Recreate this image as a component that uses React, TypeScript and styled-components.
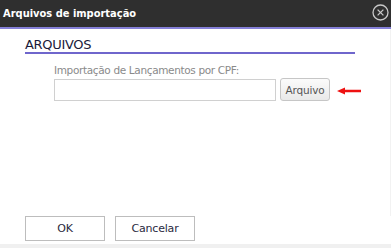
import React from 'react'
import styled, { createGlobalStyle } from 'styled-components'

const GlobalStyle = createGlobalStyle`
  html, body {
    margin: 0;
    padding: 0;
    background: #ffffff;
  }
  body {
    font-family: 'DejaVu Sans', 'Liberation Sans', sans-serif;
  }
`

const Dialog = styled.div`
  width: 391px;
  height: 248px;
  display: flex;
  flex-direction: column;
  background: #ffffff;
  box-sizing: border-box;
`

const TitleBar = styled.div`
  height: 27px;
  flex: none;
  display: flex;
  align-items: center;
  justify-content: space-between;
  padding: 0 2px 0 3px;
  background: #2f2f2f;
  border-bottom: 2px solid #8580d8;
`

const Title = styled.span`
  color: #ffffff;
  font-family: 'DejaVu Sans Condensed', 'DejaVu Sans', sans-serif;
  font-weight: bold;
  font-size: 11px;
`

const CloseButton = styled.button`
  width: 18px;
  height: 18px;
  padding: 0;
  border: none;
  background: transparent;
  display: flex;
  align-items: center;
  justify-content: center;
  margin-top: -2px;
`

const Body = styled.div`
  flex: 1;
  display: flex;
  flex-direction: column;
  padding: 8px 35px 0 25px;
  border-right: 1px solid #f2f2f2;
`

const SectionTitle = styled.h2`
  margin: 0;
  font-family: 'DejaVu Sans', sans-serif;
  font-weight: normal;
  font-size: 13px;
  letter-spacing: -0.3px;
  color: #1a1a3a;
  line-height: 15px;
  border-bottom: 2px solid #6f66cc;
`

const Field = styled.div`
  display: flex;
  flex-direction: column;
  padding: 10px 0 0 29px;
  gap: 1px;
`

const Label = styled.label`
  font-family: 'DejaVu Sans', sans-serif;
  font-size: 10.5px;
  letter-spacing: -0.35px;
  color: #8a8a8a;
  line-height: 13px;
`

const Row = styled.div`
  display: flex;
  align-items: center;
  gap: 4px;
`

const TextInput = styled.input`
  flex: none;
  width: 222px;
  height: 22px;
  box-sizing: border-box;
  border: 1px solid #d0d0d0;
  outline: none;
  margin: 0;
`

const FileButton = styled.button`
  flex: none;
  height: 23px;
  width: 50px;
  padding: 0;
  border: 1px solid #c6c6c6;
  border-radius: 3px;
  background: linear-gradient(#fbfbfb, #e9e9e9);
  font-family: 'DejaVu Sans', sans-serif;
  font-size: 10.5px;
  letter-spacing: -0.2px;
  color: #555555;
`

const Arrow = styled.svg`
  flex: none;
  margin-left: 3px;
  margin-top: 2px;
`

const Footer = styled.div`
  flex: none;
  display: flex;
  gap: 10px;
  padding: 0 0 3px 25px;
`

const DialogButton = styled.button`
  width: 80px;
  height: 25px;
  padding: 0;
  border: 1px solid #bdbdbd;
  background: #ffffff;
  font-family: 'DejaVu Sans', sans-serif;
  font-size: 11px;
  letter-spacing: -0.2px;
  color: #2a2a40;
`

const BottomStrip = styled.div`
  flex: none;
  height: 4px;
  background: #f0f0f0;
`

export default function App() {
  return (
    <>
      <GlobalStyle />
      <Dialog>
        <TitleBar>
          <Title>Arquivos de importação</Title>
          <CloseButton aria-label="Fechar">
            <svg width="17" height="17" viewBox="0 0 17 17">
              <circle cx="8.5" cy="8.5" r="7.5" fill="none" stroke="#c8c8c8" strokeWidth="1.3" />
              <path d="M5.6 5.6 L11.4 11.4 M11.4 5.6 L5.6 11.4" stroke="#c8c8c8" strokeWidth="1.3" />
            </svg>
          </CloseButton>
        </TitleBar>
        <Body>
          <SectionTitle>ARQUIVOS</SectionTitle>
          <Field>
            <Label>Importação de Lançamentos por CPF:</Label>
            <Row>
              <TextInput type="text" />
              <FileButton>Arquivo</FileButton>
              <Arrow width="24" height="8" viewBox="0 0 24 8">
                <path d="M0 4 L8 0.5 L8 2.8 L24 2.8 L24 5.2 L8 5.2 L8 7.5 Z" fill="#ee1111" />
              </Arrow>
            </Row>
          </Field>
        </Body>
        <Footer>
          <DialogButton>OK</DialogButton>
          <DialogButton>Cancelar</DialogButton>
        </Footer>
        <BottomStrip />
      </Dialog>
    </>
  )
}
